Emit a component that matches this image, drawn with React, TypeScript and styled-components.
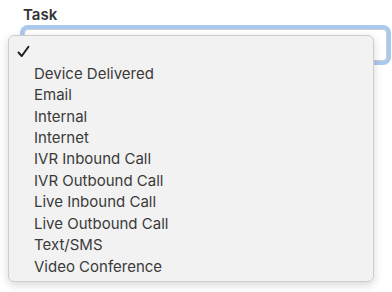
import styled, { createGlobalStyle } from 'styled-components'

const GlobalStyle = createGlobalStyle`
    body {
        margin: 0;
        background: #ffffff;
        font-family: Inter, "Liberation Sans", Arial, sans-serif;
    }
    * {
        box-sizing: border-box;
    }
`

const OPTIONS = [
    'Device Delivered',
    'Email',
    'Internal',
    'Internet',
    'IVR Inbound Call',
    'IVR Outbound Call',
    'Live Inbound Call',
    'Live Outbound Call',
    'Text/SMS',
    'Video Conference',
]

const Page = styled.div`
    position: relative;
    width: 392px;
    height: 292px;
    overflow: hidden;
`

const Field = styled.div`
    padding: 5px 3px 0 20px;
`

const Label = styled.div`
    font-weight: 600;
    font-size: 15px;
    color: #333333;
    line-height: 20px;
    margin-left: 3px;
    margin-bottom: 4px;
`

const SelectBox = styled.div`
    height: 32px;
    background: #ffffff;
    border: 1px solid #c9cfd6;
    border-radius: 4px;
    box-shadow: 0 0 0 4px #aac9ee;
    margin: 2px 2px 0 4px;
`

const Menu = styled.ul`
    position: absolute;
    left: 8px;
    top: 35px;
    width: 366px;
    height: 247px;
    margin: 0;
    padding: 5px 0 0 0;
    list-style: none;
    background: #f2f2f2;
    border: 1px solid #cdcdcd;
    border-radius: 6px;
    box-shadow: 0 3px 10px rgba(0, 0, 0, 0.16);
`

const Option = styled.li<{ $checked?: boolean }>`
    height: 21.45px;
    padding-left: ${props => (props.$checked ? '8px' : '25px')};
    font-size: 15px;
    color: #3a3a3a;
    white-space: nowrap;
    display: flex;
    align-items: center;
`

const Check = () => (
    <svg width="13" height="13" viewBox="0 0 12 12">
        <path d="M1.4 6.9 L4.4 10.2 L10.6 1.6" fill="none" stroke="#1e1e1e" strokeWidth="1.8" strokeLinecap="round" strokeLinejoin="round" />
    </svg>
)

export default function App() {
    return (
        <Page>
            <GlobalStyle />
            <Field>
                <Label>Task</Label>
                <SelectBox />
            </Field>
            <Menu>
                <Option $checked><Check /></Option>
                {OPTIONS.map(option => (
                    <Option key={option}>{option}</Option>
                ))}
            </Menu>
        </Page>
    )
}
